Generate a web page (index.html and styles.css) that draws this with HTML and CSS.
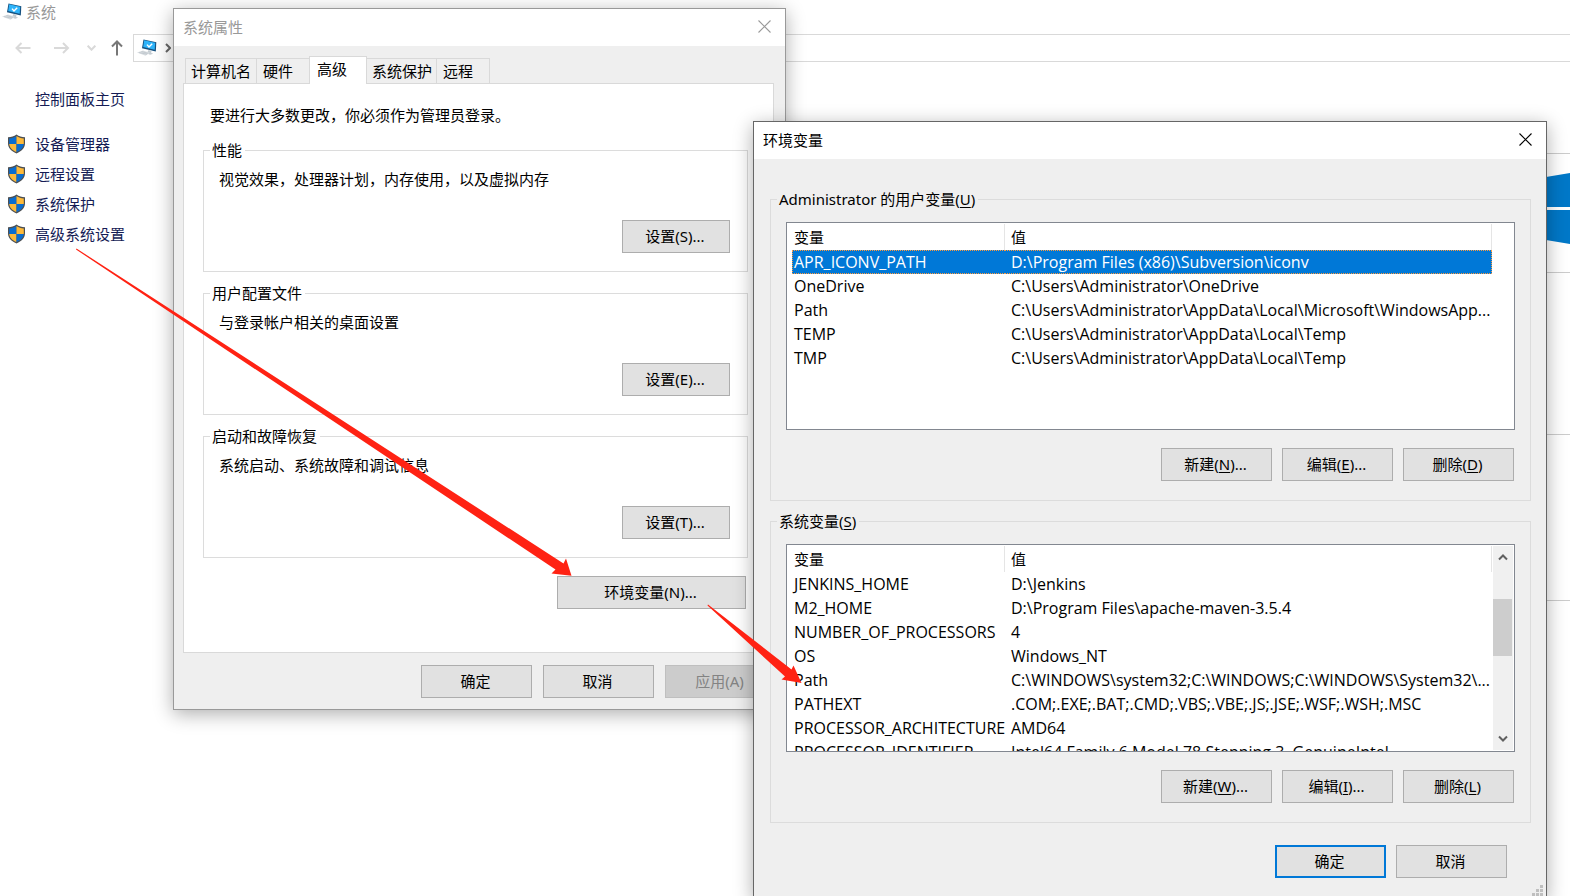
FILE: index.html
```html
<!DOCTYPE html>
<html lang="zh-CN">
<head>
<meta charset="utf-8">
<title>系统</title>
<link rel="stylesheet" href="styles.css">
</head>
<body>
<svg class="defs" aria-hidden="true">
  <symbol id="pc" viewBox="0 0 20 18">
    <path d="M6.500.500l12.800 2.700-.5 9.300-13.800-3.200z" fill="#15507e"/>
    <path d="M7.200 1.300l11 2.400-.5 7-11.500-2.700z" fill="#2fb4fa"/>
    <path d="M10 5.600l2 2.400 3.200-3.300" fill="none" stroke="#fff" stroke-width="1.400"/>
    <path d="M11.500 11l3 .7-.3 2.300 2 .8-3 1-3.500-1.300z" fill="#c3cbd1"/>
    <path d="M0 13.500l6-2 7 2.300-4.500 3z" fill="#d8dde1"/>
    <path d="M2 13.600l8 1.600M4.500 12.500l6.500 1.900" stroke="#b4bcc3" stroke-width=".6"/>
  </symbol>
  <symbol id="shield" viewBox="0 0 20 20">
    <path d="M10 .6c2.500 1.800 5.200 2.600 8.500 2.700v6c0 4.700-3.300 8-8.500 10.100-5.200-2.100-8.500-5.400-8.500-10.100v-6c3.300-.1 6-.9 8.500-2.700z" fill="#4b4f52"/>
    <path d="M10 2v8h-7.300v-5.600c2.800-.2 5-1 7.300-2.400z" fill="#0a6ccf"/>
    <path d="M10 2v8h7.300v-5.600c-2.800-.2-5-1-7.300-2.400z" fill="#fdb93a"/>
    <path d="M10 18.100v-8.100h-7.300c.3 3.700 3 6.300 7.300 8.100z" fill="#fdb93a"/>
    <path d="M10 18.100v-8.100h7.300c-.3 3.700-3 6.300-7.300 8.100z" fill="#0a6ccf"/>
  </symbol>
  <symbol id="close" viewBox="0 0 13 13">
    <path d="M.5.500l12 12M12.500.500l-12 12" fill="none" stroke="currentColor" stroke-width="1.100"/>
  </symbol>
</svg>

<div class="desktop">
  <div class="explorer">
    <header class="explorer-title"><svg class="pc"><use href="#pc"/></svg><span>系统</span></header>
    <nav class="navbar">
      <button class="nav" aria-label="后退" disabled><svg width="16" height="12" viewBox="0 0 16 12"><path d="M15.500 6h-14M6.500 1l-5 5 5 5"/></svg></button>
      <button class="nav" aria-label="前进" disabled><svg width="16" height="12" viewBox="0 0 16 12"><path d="M0 6h14M9 1l5 5-5 5"/></svg></button>
      <button class="nav small" aria-label="最近位置" disabled><svg width="9" height="6" viewBox="0 0 9 6"><path d="M.7.700l3.800 4 3.800-4"/></svg></button>
      <button class="nav up" aria-label="上移"><svg width="12" height="16" viewBox="0 0 12 16"><path d="M6 15.500v-14M1 6.500l5-5 5 5"/></svg></button>
      <div class="address"><svg class="pc"><use href="#pc"/></svg><svg class="crumb" width="6" height="10" viewBox="0 0 6 10"><path d="M1 1l4 4-4 4"/></svg></div>
    </nav>
    <div class="explorer-body">
      <aside class="sidebar">
        <a class="home" href="#">控制面板主页</a>
        <a href="#"><svg><use href="#shield"/></svg>设备管理器</a>
        <a href="#"><svg><use href="#shield"/></svg>远程设置</a>
        <a href="#"><svg><use href="#shield"/></svg>系统保护</a>
        <a href="#"><svg><use href="#shield"/></svg>高级系统设置</a>
      </aside>
      <main class="content">
        <div class="edition"><svg class="logo" viewBox="0 0 24 72"><path d="M0 4l24-4v34h-24zM0 37h24v34l-24-4z" fill="#0078c8"/></svg></div>
        <div class="section system"></div>
        <div class="section names"></div>
        <div class="section"></div>
      </main>
    </div>
  </div>

  <section class="dialog props" aria-label="系统属性">
    <header class="titlebar"><h1>系统属性</h1><button class="close" aria-label="关闭"><svg><use href="#close"/></svg></button></header>
    <div class="tabs" role="tablist">
      <button class="tab wide" role="tab">计算机名</button>
      <button class="tab" role="tab">硬件</button>
      <button class="tab selected" role="tab" aria-selected="true">高级</button>
      <button class="tab wide" role="tab">系统保护</button>
      <button class="tab" role="tab">远程</button>
    </div>
    <div class="panel" role="tabpanel">
      <p>要进行大多数更改，你必须作为管理员登录。</p>
      <fieldset><legend>性能</legend><p>视觉效果，处理器计划，内存使用，以及虚拟内存</p><button class="btn">设置(S)...</button></fieldset>
      <fieldset><legend>用户配置文件</legend><p>与登录帐户相关的桌面设置</p><button class="btn">设置(E)...</button></fieldset>
      <fieldset><legend>启动和故障恢复</legend><p>系统启动、系统故障和调试信息</p><button class="btn">设置(T)...</button></fieldset>
      <button class="btn env-btn">环境变量(N)...</button>
    </div>
    <footer class="actions"><button class="btn">确定</button><button class="btn">取消</button><button class="btn" disabled>应用(A)</button></footer>
  </section>

  <section class="dialog env" aria-label="环境变量">
    <header class="titlebar"><h1>环境变量</h1><button class="close" aria-label="关闭"><svg><use href="#close"/></svg></button></header>
    <fieldset>
      <legend>Administrator 的用户变量(<u>U</u>)</legend>
      <div class="list">
        <table>
          <thead><tr><th class="name">变量</th><th>值</th></tr></thead>
          <tbody>
            <tr class="selected"><td>APR_ICONV_PATH</td><td>D:\Program Files (x86)\Subversion\iconv</td></tr>
            <tr><td>OneDrive</td><td>C:\Users\Administrator\OneDrive</td></tr>
            <tr><td>Path</td><td>C:\Users\Administrator\AppData\Local\Microsoft\WindowsApp...</td></tr>
            <tr><td>TEMP</td><td>C:\Users\Administrator\AppData\Local\Temp</td></tr>
            <tr><td>TMP</td><td>C:\Users\Administrator\AppData\Local\Temp</td></tr>
          </tbody>
        </table>
        <div class="gutter"></div>
      </div>
      <div class="actions"><button class="btn">新建(<u>N</u>)...</button><button class="btn">编辑(<u>E</u>)...</button><button class="btn">删除(<u>D</u>)</button></div>
    </fieldset>
    <fieldset>
      <legend>系统变量(<u>S</u>)</legend>
      <div class="list">
        <table>
          <thead><tr><th class="name">变量</th><th>值</th></tr></thead>
          <tbody>
            <tr><td>JENKINS_HOME</td><td>D:\Jenkins</td></tr>
            <tr><td>M2_HOME</td><td>D:\Program Files\apache-maven-3.5.4</td></tr>
            <tr><td>NUMBER_OF_PROCESSORS</td><td>4</td></tr>
            <tr><td>OS</td><td>Windows_NT</td></tr>
            <tr><td>Path</td><td>C:\WINDOWS\system32;C:\WINDOWS;C:\WINDOWS\System32\...</td></tr>
            <tr><td>PATHEXT</td><td>.COM;.EXE;.BAT;.CMD;.VBS;.VBE;.JS;.JSE;.WSF;.WSH;.MSC</td></tr>
            <tr><td>PROCESSOR_ARCHITECTURE</td><td>AMD64</td></tr>
            <tr><td>PROCESSOR_IDENTIFIER</td><td>Intel64 Family 6 Model 78 Stepping 3, GenuineIntel</td></tr>
          </tbody>
        </table>
        <div class="gutter scrollbar">
          <button aria-label="向上滚动"><svg width="10" height="8" viewBox="0 0 10 8"><path d="M1 6.500l4-4 4 4"/></svg></button>
          <div class="track"><div class="thumb"></div></div>
          <button aria-label="向下滚动"><svg width="10" height="8" viewBox="0 0 10 8"><path d="M1 1.500l4 4 4-4"/></svg></button>
        </div>
      </div>
      <div class="actions"><button class="btn">新建(<u>W</u>)...</button><button class="btn">编辑(<u>I</u>)...</button><button class="btn">删除(<u>L</u>)</button></div>
    </fieldset>
    <footer class="actions"><button class="btn primary">确定</button><button class="btn">取消</button></footer>
    <svg class="grip" width="11" height="11" viewBox="0 0 11 11"><path d="M8 0h3v3h-3zM4 4h3v3h-3zM8 4h3v3h-3zM0 8h3v3h-3zM4 8h3v3h-3zM8 8h3v3h-3z" fill="#bfbfbf"/></svg>
  </section>

  <svg class="arrows" width="820" height="700" viewBox="0 0 820 700" aria-hidden="true">
    <path d="M76.500 248.500L563.500 563.500 566 558.500 571.500 575.700 551.500 573.500 555.500 569.500 76 249.500z"/>
    <path d="M708 604.500L791.500 669.500 793.500 665.500 801.500 683 781.500 679.500 785 676.500 707.500 605.500z"/>
  </svg>
</div>
</body>
</html>
```
FILE: styles.css
```css
* { box-sizing: border-box; }

body {
  margin: 0;
  background: #fff;
  color: #000;
  font: 15px/20px "Noto Sans", "Noto Sans CJK SC", sans-serif;
}

button {
  font: inherit;
  color: inherit;
  padding: 0;
  border: 0;
  background: none;
}

svg { display: block; flex: none; }
u { text-underline-offset: 2px; }
p { margin: 0; }
.defs { position: absolute; width: 0; height: 0; }

.desktop {
  position: relative;
  height: 100vh;
  overflow: hidden;
}

/* Control panel window */
.explorer-title {
  display: flex;
  align-items: center;
  gap: 4px;
  height: 26px;
  padding: 0 0 2px 2px;
  color: #999;
}
.pc { width: 20px; height: 18px; }

.navbar {
  display: flex;
  align-items: center;
  margin-top: 8px;
  padding-left: 15px;
}
.nav { width: 16px; margin-right: 23px; }
.nav svg { fill: none; stroke: #d9d9d9; stroke-width: 2; }
.nav.small { width: 9px; margin: 0 15px 0 -6px; }
.nav.up { width: 12px; margin-right: 10px; }
.nav.up svg { stroke: #777; }
.address {
  display: flex;
  flex: 1;
  align-items: center;
  gap: 8px;
  height: 28px;
  padding-left: 3px;
  border: 1px solid #d9d9d9;
  border-right: 0;
}
.crumb { fill: none; stroke: #666; stroke-width: 2; }

.explorer-body { display: flex; }
.sidebar {
  display: flex;
  flex-direction: column;
  flex: none;
  gap: 10px;
  width: 280px;
  padding: 27px 0 0 6px;
}
.sidebar a {
  display: flex;
  align-items: center;
  gap: 8px;
  color: #151c55;
  text-decoration: none;
}
.sidebar svg { width: 21px; height: 20px; }
.sidebar .home { padding-left: 29px; margin-bottom: 15px; }

.content { flex: 1; padding-top: 91px; }
.section, .edition { border-top: 1px solid #ccc; }
.edition {
  display: flex;
  justify-content: flex-end;
  height: 119px;
  padding-top: 19px;
}
.logo { width: 24px; height: 72px; }
.system { height: 162px; }
.names { height: 166px; }

/* Dialogs */
.dialog {
  position: absolute;
  background: #efefef;
  border: 1px solid #999;
  box-shadow: 0 4px 18px rgba(0, 0, 0, .32);
}
.props { left: 173px; right: 784px; top: 8px; }
.env { left: 753px; right: 23px; top: 121px; border-color: #666; }

.titlebar {
  display: flex;
  align-items: center;
  justify-content: space-between;
  height: 37px;
  padding: 0 14px 2px 9px;
  background: #fff;
}
.titlebar h1 { margin: 0; font-size: 15px; font-weight: 400; }
.props .titlebar { color: #999; }
.close svg { width: 13px; height: 13px; }

.btn {
  width: 111px;
  height: 33px;
  padding: 0 2px 2px 0;
  border: 1px solid #adadad;
  background: #e1e1e1;
}
.btn:disabled { color: #838383; background: #ccc; border-color: #bfbfbf; }
.btn.primary { border: 2px solid #0078d7; }

.actions { display: flex; justify-content: flex-end; gap: 10px; }

fieldset {
  min-width: 0;
  margin: 0;
  padding: 13px 15px 19px;
  border: 1px solid #dcdcdc;
}
legend { height: 20px; margin-left: -9px; padding: 0 3px 0 2px; }

/* System properties */
.tabs {
  display: flex;
  align-items: flex-end;
  height: 38px;
  margin-bottom: -1px;
  padding: 10px 0 0 11px;
}
.tab {
  width: 54px;
  height: 26px;
  margin-right: -1px;
  padding-left: 6px;
  border: 1px solid #d9d9d9;
  text-align: left;
}
.tab.wide { width: 72px; padding-left: 5px; }
.tab.selected {
  width: 58px;
  height: 28px;
  padding: 0 0 4px 7px;
  background: #fff;
  border-bottom: 0;
  z-index: 1;
}
.selected + .tab.wide { width: 71px; }
.panel {
  display: flex;
  flex-direction: column;
  gap: 11px;
  margin: 0 11px 0 9px;
  padding: 21px 25px 43px 19px;
  background: #fff;
  border: 1px solid #d9d9d9;
}
.panel > p { margin-bottom: 4px; padding-left: 7px; }
.panel fieldset {
  padding: 9px 17px 18px 15px;
}
.panel fieldset .btn { display: block; width: 108px; margin: 31px 0 0 auto; }
.env-btn { align-self: flex-end; width: 189px; margin: 7px 2px 0 0; }
.props > .actions { padding: 12px 9px 11px 0; gap: 11px; }

/* Environment variables */
.env fieldset { margin: 0 15px 10px 16px; }
.env fieldset .actions { padding-right: 1px; }
.titlebar + fieldset { margin-top: 30px; }
.list {
  display: flex;
  height: 208px;
  margin-bottom: 18px;
  padding: 1px 1px 1px 5px;
  overflow: hidden;
  background: #fff;
  border: 1px solid #828790;
}
table {
  flex: 1;
  align-self: flex-start;
  table-layout: fixed;
  width: 0;
  border-collapse: separate;
  border-spacing: 0;
}
th, td {
  height: 24px;
  padding: 0 0 0 2px;
  font-weight: 400;
  line-height: 24px;
  text-align: left;
  white-space: nowrap;
}
td { font-family: "Open Sans", sans-serif; font-size: 16px; }
th { height: 26px; line-height: 26px; border-right: 1px solid #e5e5e5; }
th.name { width: 213px; }
th + th, td + td { padding-left: 6px; }
.selected td { line-height: 22px; color: #fff; background: #0078d7; border: 1px dotted #ff9a3c; border-width: 1px 0; }
.selected td:first-child { border-left-width: 1px; padding-left: 1px; }
.selected td:last-child { border-right-width: 1px; }

.gutter { width: 21px; }
.scrollbar {
  display: flex;
  flex-direction: column;
  width: 20px;
  margin-left: 1px;
  background: #f0f0f0;
}
.scrollbar button { display: flex; justify-content: center; align-items: center; height: 22px; }
.scrollbar path { fill: none; stroke: #606060; stroke-width: 2; }
.track { flex: 1; padding-top: 31px; }
.thumb { width: 19px; height: 57px; background: #cdcdcd; }
.env > .actions { padding: 12px 39px 20px 0; }
.grip { position: absolute; right: 3px; bottom: 2px; }

.arrows { position: absolute; left: 0; top: 0; fill: #ff2213; pointer-events: none; }
```
